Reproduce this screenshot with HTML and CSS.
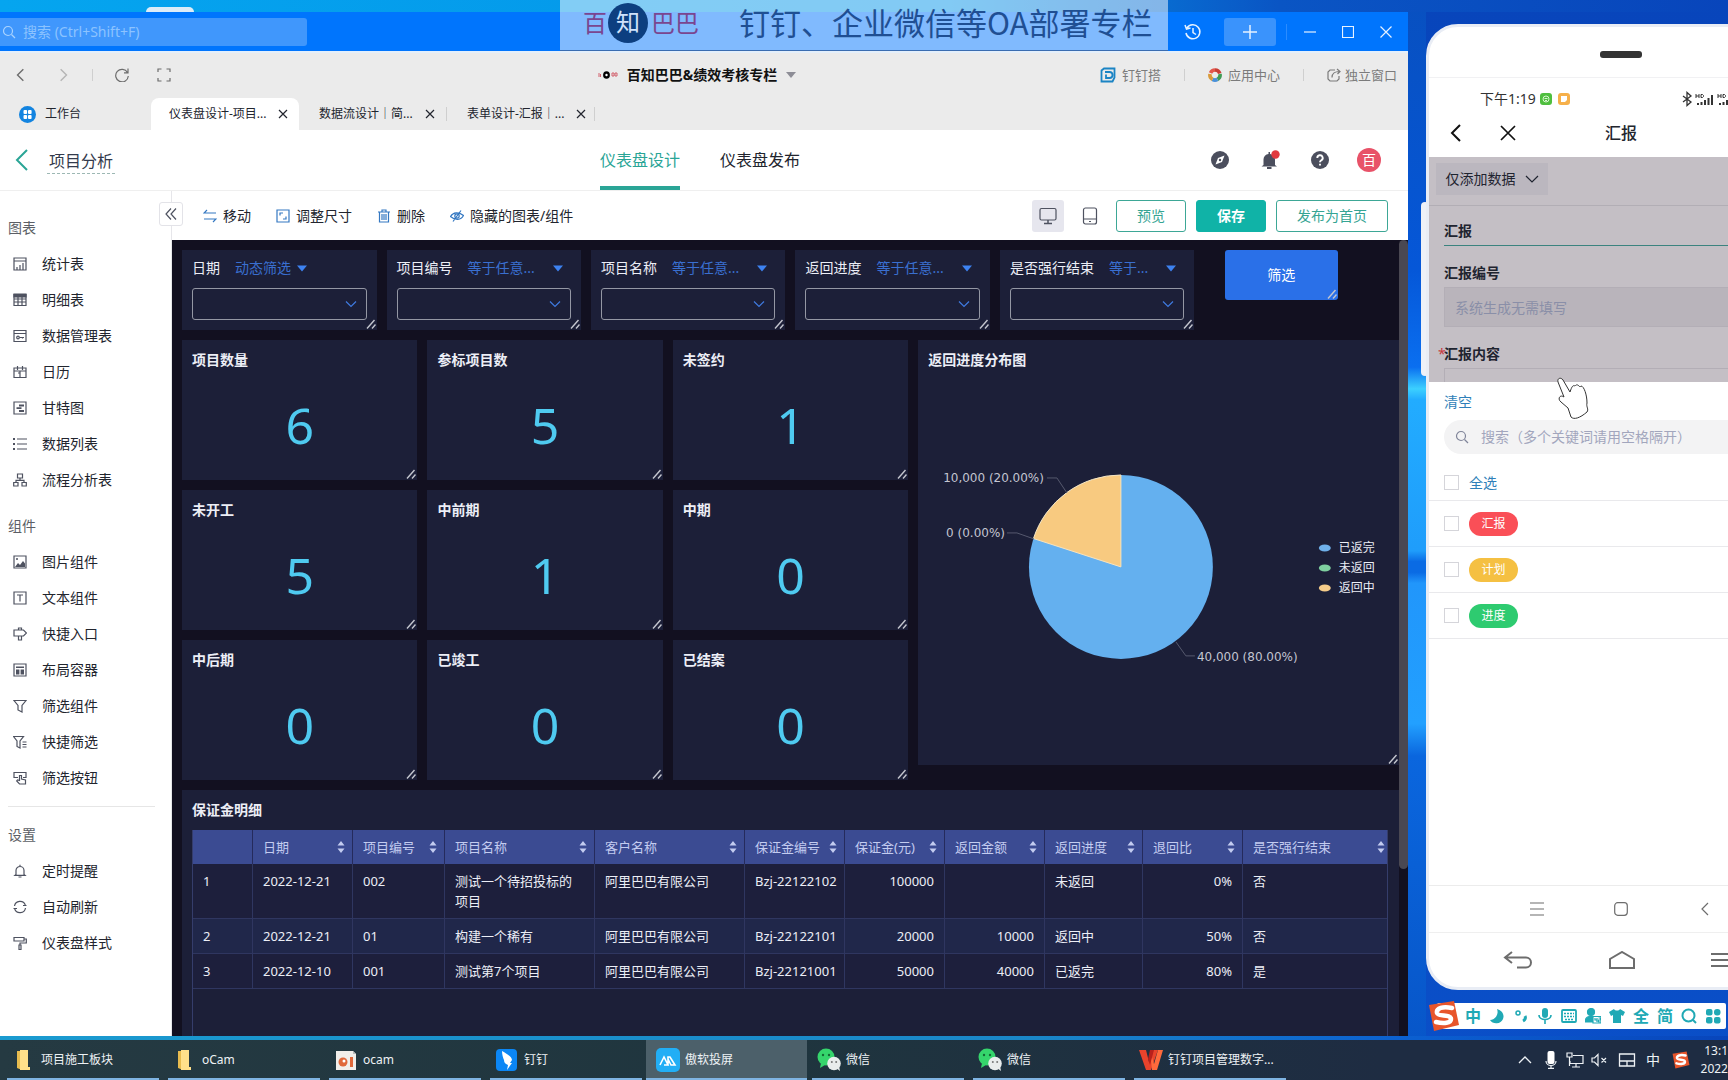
FILE: index.html
```html
<!DOCTYPE html>
<html lang="zh-CN">
<head>
<meta charset="utf-8">
<title>项目分析</title>
<link rel="stylesheet" href="styles.css">
</head>
<body>
<svg class="defs" aria-hidden="true">
  <symbol id="x" viewBox="0 0 12 12"><path d="M2 2l8 8M10 2l-8 8"/></symbol>
  <symbol id="left" viewBox="0 0 12 12"><path d="M8 1L3 6l5 5"/></symbol>
  <symbol id="right" viewBox="0 0 12 12"><path d="M4 1l5 5-5 5"/></symbol>
  <symbol id="down" viewBox="0 0 12 12"><path d="M1 3.500l5 5 5-5"/></symbol>
  <symbol id="caret" viewBox="0 0 10 6"><path d="M0 0h10L5 6z" fill="currentColor" stroke="none"/></symbol>
  <symbol id="search" viewBox="0 0 14 14"><circle cx="6" cy="6" r="4.500"/><path d="M9.500 9.500L13 13"/></symbol>
  <symbol id="grip" viewBox="0 0 10 10"><path d="M1 9.500L8.500 1M6 9.500l3.500-4"/></symbol>
  <symbol id="sort" viewBox="0 0 8 12"><path d="M4 0l3.500 4.500h-7zM4 12L.5 7.500h7z" fill="currentColor" stroke="none"/></symbol>
  <symbol id="i-stat" viewBox="0 0 14 14"><path d="M1 1h12v12H1zM1 4h12M4 13v-3M7 13V8M10 13V6"/></symbol>
  <symbol id="i-grid" viewBox="0 0 14 14"><path d="M1 1.500h12v11H1zM1 6h12M1 9h12M5 4v9M9 4v9"/><path d="M1 1h12v3H1z" fill="currentColor"/></symbol>
  <symbol id="i-manage" viewBox="0 0 14 14"><path d="M1 1.500h12v11H1zM1 4.500h12M6.500 8.500H11M9.500 8.500v1"/><circle cx="5" cy="8.500" r="1.300"/></symbol>
  <symbol id="i-cal" viewBox="0 0 14 14"><path d="M1 3h12v9.500H1zM1 6h12M4.500 1v4M9.500 1v4M7 6v6M5 8h2"/></symbol>
  <symbol id="i-gantt" viewBox="0 0 14 14"><path d="M1 1h12v12H1z"/><path d="M6 4.500h5M3.500 7.200h5M6 10h5" stroke-width="1.800"/></symbol>
  <symbol id="i-list" viewBox="0 0 14 14"><path d="M4 2h10M4 7h10M4 12h10"/><path d="M0 2h2M0 7h2M0 12h2" stroke-width="2"/></symbol>
  <symbol id="i-flow" viewBox="0 0 14 14"><path d="M4.500 1h5v4h-5zM.7 9.500h4.300v3.500H.7zM9 9.500h4.300v3.500H9zM7 5v2.300M3 9.500V7.300h8v2.200"/></symbol>
  <symbol id="i-pic" viewBox="0 0 14 14"><path d="M1 1h12v12H1z"/><path d="M2 12l3-4 2 2 3-4 2 2.500V12z" fill="currentColor" stroke="none"/><circle cx="4" cy="4" r="1" fill="currentColor" stroke="none"/></symbol>
  <symbol id="i-text" viewBox="0 0 14 14"><path d="M1 1h12v12H1zM4 4h6M7 4v6.500"/></symbol>
  <symbol id="i-sign" viewBox="0 0 14 14"><path d="M1 3h9.500L13.500 6 10.500 9H1zM5.500 3V1h3v2M5.500 9v4h3V9"/></symbol>
  <symbol id="i-layout" viewBox="0 0 14 14"><path d="M1 1h12v12H1z"/><path d="M3 3.500h8v1.500H3zM3 6.500h3.400v5H3zM7.600 6.500H11v5H7.600z" fill="currentColor" stroke="none"/></symbol>
  <symbol id="i-funnel" viewBox="0 0 14 14"><path d="M1 1.500h12L9 6.500V13l-4-2V6.500z"/></symbol>
  <symbol id="i-quick" viewBox="0 0 14 14"><path d="M.5 1.500h10L7 6v7l-3-1.500V6zM9.500 7h4M9.500 9.500h4M9.500 12h4"/></symbol>
  <symbol id="i-press" viewBox="0 0 14 14"><path d="M5 6.500H1v-5h12v5h-3M6.500 4.500v5l-2-.5-.8 1L6.500 13h6V9l-4-1V4.500z"/></symbol>
  <symbol id="i-bell" viewBox="0 0 14 14"><path d="M3 10.500V6.500a4 4 0 0 1 8 0v4l1 .8H2zM7 2.500V.7M5.500 13h3"/></symbol>
  <symbol id="i-sync" viewBox="0 0 14 14"><path d="M1.500 6A5.600 5.600 0 0 1 12.300 5M12.500 8A5.600 5.600 0 0 1 1.700 9M10 5.500h3.500M.5 8.500H4"/></symbol>
  <symbol id="i-roller" viewBox="0 0 14 14"><path d="M1 1.500h10V5H1zM11 3h2.300v4H7v2M6 9h2v4.500H6z"/></symbol>
  <symbol id="folder" viewBox="0 0 24 24"><path d="M5 3h6v17l-1 2-5-2z" fill="#e8bc4f"/><path d="M8 2h8v17h2l0 3H8z" fill="#ffe08a"/></symbol>
  <symbol id="wechat" viewBox="0 0 24 24"><circle cx="9" cy="9" r="8.500" fill="#35d56c"/><path d="M4 15l-1 5 5-3z" fill="#35d56c"/><circle cx="6" cy="7" r="1.200" fill="#146b35"/><circle cx="12" cy="7" r="1.200" fill="#146b35"/><circle cx="17" cy="15.500" r="6.800" fill="#e9ecec"/><path d="M19 20l4 3-1-5z" fill="#e9ecec"/><circle cx="14.800" cy="14" r="1" fill="#777"/><circle cx="19.200" cy="14" r="1" fill="#777"/></symbol>
  <symbol id="sogou" viewBox="0 0 32 32"><path d="M1 5L26 1l5 24L6 31z" fill="#e8552b"/><path d="M24 8C15 6 8 8 9 13c1 4 14 1 14 6 0 4-7 5-15 3" fill="none" stroke="#fff" stroke-width="4.500" stroke-linecap="round"/></symbol>
</svg>

<div class="desktop">
  <div class="stage">
    <main class="window">
      <header class="titlebar">
        <label class="find"><svg class="ic s14"><use href="#search"/></svg><input type="text" placeholder="搜索 (Ctrl+Shift+F)" aria-label="搜索"></label>
        <div class="winctl">
          <button aria-label="历史"><svg class="ic s18" viewBox="0 0 18 18"><path d="M3 5a7 7 0 1 1-1 5M1 2l1.500 4L6.500 5M9 5v4.500l3 2" stroke-width="1.500"/></svg></button>
          <button class="plus" aria-label="新建"><svg class="ic s14" viewBox="0 0 14 14"><path d="M7 0v14M0 7h14" stroke-width="1.500"/></svg></button>
          <i class="vsep"></i>
          <button aria-label="最小化"><svg class="ic s12" viewBox="0 0 12 12"><path d="M0 6h12"/></svg></button>
          <button aria-label="最大化"><svg class="ic s12" viewBox="0 0 12 12"><path d="M.5.5h11v11H.5z"/></svg></button>
          <button aria-label="关闭"><svg class="ic s12" viewBox="0 0 12 12"><path d="M.5.5l11 11M11.500.5l-11 11"/></svg></button>
        </div>
      </header>

      <nav class="navrow">
        <div class="navleft">
          <button aria-label="后退"><svg class="ic s14"><use href="#left"/></svg></button>
          <button class="off" aria-label="前进"><svg class="ic s14"><use href="#right"/></svg></button>
          <i class="vsep"></i>
          <button class="reload" aria-label="刷新"><svg class="ic s14" viewBox="0 0 14 14"><path d="M12.500 4.500A6.300 6.300 0 1 0 13.300 8M13 .5v4.300H9"/></svg></button>
          <button aria-label="全屏"><svg class="ic s14" viewBox="0 0 14 14"><path d="M1 4V1h3.500M9.500 1H13v3M13 10v3H9.500M4.500 13H1v-3"/></svg></button>
        </div>
        <button class="org"><svg class="orglogo" viewBox="0 0 20 8"><path d="M1 2v4M2.500 3v3M14 2h2v3h-2zM17 2h2v3h-2z" stroke="#d2616c" fill="none"/><ellipse cx="8.500" cy="4" rx="3.400" ry="3.800"/><circle cx="8.500" cy="4" r="1.200" fill="#fff"/></svg><b>百知巴巴&amp;绩效考核专栏</b><svg class="caret"><use href="#caret"/></svg></button>
        <div class="navright">
          <a href="#"><svg class="ic s16 blue" viewBox="0 0 16 16"><path d="M4 1.500h10.500v9l-2 4H1.500v-11zM5 5h4.500a2.800 2.800 0 0 1 0 6H6V7.500" stroke-width="1.800"/></svg>钉钉搭</a>
          <i class="vsep"></i>
          <a href="#"><svg class="s14" viewBox="0 0 14 14" fill="none" stroke-width="3.600"><path d="M2.500 5A5 5 0 0 1 7 2" stroke="#e2574c"/><path d="M7 2a5 5 0 0 1 4.800 3.500" stroke="#c93d34"/><path d="M12 6a5 5 0 0 1-2.500 5.300" stroke="#3f9b54"/><path d="M9.500 11.400a5 5 0 0 1-5 0" stroke="#4a90d8"/><path d="M4.500 11.300A5 5 0 0 1 2 6" stroke="#d99a3a"/></svg>应用中心</a>
          <i class="vsep"></i>
          <a class="solo" href="#"><svg class="ic s14" viewBox="0 0 14 14"><path d="M8 2H3L1 4v7l2 2h7l2-2V8M5 9.500c0-4 3-6 7.500-6M10 1l3 2.500-2.500 2.500"/></svg>独立窗口</a>
        </div>
      </nav>

      <div class="tabs">
        <a class="home" href="#"><svg class="s17" viewBox="0 0 17 17"><circle cx="8.500" cy="8.500" r="8.500" fill="#1384e0"/><g fill="#fff"><rect x="4.500" y="4" width="3.600" height="4" rx="1"/><rect x="9" y="4" width="3.600" height="4" rx="1"/><rect x="4.500" y="9" width="3.600" height="4" rx="1"/><rect x="9" y="9" width="3.600" height="4" rx="1"/></g></svg>工作台</a>
        <div class="tab on"><span>仪表盘设计-项目...</span><button aria-label="关闭"><svg class="ic s12"><use href="#x"/></svg></button></div>
        <div class="tab"><span>数据流设计｜简...</span><button aria-label="关闭"><svg class="ic s12"><use href="#x"/></svg></button></div>
        <div class="tab"><span>表单设计-汇报｜...</span><button aria-label="关闭"><svg class="ic s12"><use href="#x"/></svg></button></div>
      </div>

      <div class="apphead">
        <div class="crumb"><a href="#" aria-label="返回"><svg class="ic teal" width="14" height="22" viewBox="0 0 14 22"><path d="M12 1L2 11l10 10" stroke-width="2"/></svg></a><span>项目分析</span></div>
        <nav class="modes"><a class="on" href="#">仪表盘设计</a><a href="#">仪表盘发布</a></nav>
        <div class="acts">
          <button aria-label="导航"><svg class="s18" viewBox="0 0 18 18"><circle cx="9" cy="9" r="9" fill="#4b4e5d"/><path d="M13.500 4.500L11 11l-6.500 2.500L7 7z" fill="#fff"/><circle cx="9" cy="9" r="1.200" fill="#4b4e5d"/></svg></button>
          <button aria-label="通知"><svg class="s18 over" viewBox="0 0 18 18"><path d="M2.500 14V8.500a5.500 5.500 0 0 1 5-5.500V1H9v2c3 .5 5 2.500 5 5.500V14l2 1.500H.5zM6 16h4.500v2H6z" fill="#4b4e5d"/><circle cx="14.500" cy="3.500" r="4.200" fill="#e0393e"/></svg></button>
          <button aria-label="帮助"><svg class="ic s18 white" viewBox="0 0 18 18"><circle cx="9" cy="9" r="9" fill="#4b4e5d" stroke="none"/><path d="M6.300 7a2.700 2.700 0 1 1 4 2.300c-1 .6-1.300 1-1.300 2M9 12.800v1.800" stroke-width="1.900"/></svg></button>
          <span class="avatar">百</span>
        </div>
      </div>

      <div class="workspace">
        <aside class="side">
          <h2>图表</h2>
          <ul>
            <li><svg class="ic s14"><use href="#i-stat"/></svg>统计表</li>
            <li><svg class="ic s14"><use href="#i-grid"/></svg>明细表</li>
            <li><svg class="ic s14"><use href="#i-manage"/></svg>数据管理表</li>
            <li><svg class="ic s14"><use href="#i-cal"/></svg>日历</li>
            <li><svg class="ic s14"><use href="#i-gantt"/></svg>甘特图</li>
            <li><svg class="ic s14"><use href="#i-list"/></svg>数据列表</li>
            <li><svg class="ic s14"><use href="#i-flow"/></svg>流程分析表</li>
          </ul>
          <h2>组件</h2>
          <ul>
            <li><svg class="ic s14"><use href="#i-pic"/></svg>图片组件</li>
            <li><svg class="ic s14"><use href="#i-text"/></svg>文本组件</li>
            <li><svg class="ic s14"><use href="#i-sign"/></svg>快捷入口</li>
            <li><svg class="ic s14"><use href="#i-layout"/></svg>布局容器</li>
            <li><svg class="ic s14"><use href="#i-funnel"/></svg>筛选组件</li>
            <li><svg class="ic s14"><use href="#i-quick"/></svg>快捷筛选</li>
            <li><svg class="ic s14"><use href="#i-press"/></svg>筛选按钮</li>
          </ul>
          <hr>
          <h2>设置</h2>
          <ul>
            <li><svg class="ic s14"><use href="#i-bell"/></svg>定时提醒</li>
            <li><svg class="ic s14"><use href="#i-sync"/></svg>自动刷新</li>
            <li><svg class="ic s14"><use href="#i-roller"/></svg>仪表盘样式</li>
          </ul>
          <button class="fold" aria-label="收起"><svg class="ic s12" viewBox="0 0 12 12"><path d="M6 .5L1 6l5 5.500M11 .5L6 6l5 5.500"/></svg></button>
        </aside>

        <section class="editor">
          <div class="toolbar">
            <button><svg class="ic s14 blue" viewBox="0 0 14 14"><path d="M4 1L1 4h12M10 13l3-3H1"/></svg>移动</button>
            <button><svg class="ic s14 blue" viewBox="0 0 14 14"><path d="M1 1h12v12H1zM4 6.500V4h3M10 7.500V10H7"/></svg>调整尺寸</button>
            <button><svg class="ic s14 blue" viewBox="0 0 14 14"><path d="M1 3h12M5 3V1h4v2M2.500 3v10h9V3M5 5v6M7 5v6M9 5v6"/></svg>删除</button>
            <button><svg class="ic s14 blue" viewBox="0 0 14 14"><path d="M.5 7.500C3 3 9 2.500 13.500 6.500 11 11.500 5 11.500.5 7.500zM11 1.500L3 12.500"/><circle cx="7" cy="7" r="2.200"/></svg>隐藏的图表/组件</button>
            <div class="tools">
              <button class="dev on" aria-label="电脑"><svg class="ic s18" viewBox="0 0 18 18"><rect x="1" y="1.500" width="16" height="11.500" rx="1.500"/><path d="M9 13v3M5 16.500h8" stroke-width="1.500"/></svg></button>
              <button class="dev" aria-label="手机"><svg class="ic s18" viewBox="0 0 18 18"><rect x="2.500" y="1" width="13" height="16" rx="2"/><path d="M3 12h12M8 14.500h2"/></svg></button>
              <button class="btn">预览</button>
              <button class="btn solid">保存</button>
              <button class="btn wide">发布为首页</button>
            </div>
          </div>

          <div class="view">
            <div class="board">
              <div class="card filter"><div class="fl"><label for="f1">日期</label><button class="tight">动态筛选<svg><use href="#caret"/></svg></button></div><div class="sel"><select id="f1"></select><svg class="ic s12"><use href="#down"/></svg></div><svg class="grip"><use href="#grip"/></svg></div>
              <div class="card filter"><div class="fl"><label for="f2">项目编号</label><button>等于任意...<svg><use href="#caret"/></svg></button></div><div class="sel"><select id="f2"></select><svg class="ic s12"><use href="#down"/></svg></div><svg class="grip"><use href="#grip"/></svg></div>
              <div class="card filter"><div class="fl"><label for="f3">项目名称</label><button>等于任意...<svg><use href="#caret"/></svg></button></div><div class="sel"><select id="f3"></select><svg class="ic s12"><use href="#down"/></svg></div><svg class="grip"><use href="#grip"/></svg></div>
              <div class="card filter"><div class="fl"><label for="f4">返回进度</label><button>等于任意...<svg><use href="#caret"/></svg></button></div><div class="sel"><select id="f4"></select><svg class="ic s12"><use href="#down"/></svg></div><svg class="grip"><use href="#grip"/></svg></div>
              <div class="card filter"><div class="fl"><label for="f5">是否强行结束</label><button>等于...<svg><use href="#caret"/></svg></button></div><div class="sel"><select id="f5"></select><svg class="ic s12"><use href="#down"/></svg></div><svg class="grip"><use href="#grip"/></svg></div>
              <button class="go">筛选<svg class="grip"><use href="#grip"/></svg></button>

              <div class="card stat"><h3>项目数量</h3><p>6</p><svg class="grip"><use href="#grip"/></svg></div>
              <div class="card stat"><h3>参标项目数</h3><p>5</p><svg class="grip"><use href="#grip"/></svg></div>
              <div class="card stat"><h3>未签约</h3><p>1</p><svg class="grip"><use href="#grip"/></svg></div>
              <div class="card pie">
                <h3>返回进度分布图</h3>
                <svg class="chart" viewBox="0 0 481 385">
                  <circle cx="203" cy="187" r="92" fill="#64b0ef"/>
                  <path d="M203 187V95A92 92 0 0 0 115.500 158.600z" fill="#f8ca80" stroke="#f5e3c0" stroke-width="1"/>
                  <g fill="none" stroke="#55586d"><path d="M129 98h10l10 15M89 153h10l17 6M258 262l10 14h9"/></g>
                  <g class="lab"><text x="126" y="102" text-anchor="end">10,000 (20.00%)</text><text x="87" y="157" text-anchor="end">0 (0.00%)</text><text x="279" y="281">40,000 (80.00%)</text></g>
                  <g><ellipse cx="407" cy="168" rx="6" ry="3.500" fill="#6fb0ea"/><ellipse cx="407" cy="188" rx="6" ry="3.500" fill="#7fd0a0"/><ellipse cx="407" cy="208" rx="6" ry="3.500" fill="#f5cc8a"/></g>
                  <g class="leg"><text x="421" y="172">已返完</text><text x="421" y="192">未返回</text><text x="421" y="212">返回中</text></g>
                </svg>
                <svg class="grip"><use href="#grip"/></svg>
              </div>
              <div class="card stat"><h3>未开工</h3><p>5</p><svg class="grip"><use href="#grip"/></svg></div>
              <div class="card stat"><h3>中前期</h3><p>1</p><svg class="grip"><use href="#grip"/></svg></div>
              <div class="card stat"><h3>中期</h3><p>0</p><svg class="grip"><use href="#grip"/></svg></div>
              <div class="card stat"><h3>中后期</h3><p>0</p><svg class="grip"><use href="#grip"/></svg></div>
              <div class="card stat"><h3>已竣工</h3><p>0</p><svg class="grip"><use href="#grip"/></svg></div>
              <div class="card stat"><h3>已结案</h3><p>0</p><svg class="grip"><use href="#grip"/></svg></div>

              <div class="card detail">
                <h3>保证金明细</h3>
                <div class="tbox">
                  <table>
                    <colgroup><col class="w60"><col class="w100"><col class="w92"><col class="w150"><col class="w150"><col class="w100"><col class="w100"><col class="w100"><col class="w98"><col class="w100"><col></colgroup>
                    <thead><tr><th></th><th>日期<svg><use href="#sort"/></svg></th><th>项目编号<svg><use href="#sort"/></svg></th><th>项目名称<svg><use href="#sort"/></svg></th><th>客户名称<svg><use href="#sort"/></svg></th><th>保证金编号<svg><use href="#sort"/></svg></th><th>保证金(元)<svg><use href="#sort"/></svg></th><th>返回金额<svg><use href="#sort"/></svg></th><th>返回进度<svg><use href="#sort"/></svg></th><th>退回比<svg><use href="#sort"/></svg></th><th>是否强行结束<svg><use href="#sort"/></svg></th></tr></thead>
                    <tbody>
                      <tr><td>1</td><td>2022-12-21</td><td>002</td><td>测试一个待招投标的项目</td><td>阿里巴巴有限公司</td><td class="code">Bzj-22122102</td><td class="n">100000</td><td class="n"></td><td>未返回</td><td class="n">0%</td><td>否</td></tr>
                      <tr><td>2</td><td>2022-12-21</td><td>01</td><td>构建一个稀有</td><td>阿里巴巴有限公司</td><td class="code">Bzj-22122101</td><td class="n">20000</td><td class="n">10000</td><td>返回中</td><td class="n">50%</td><td>否</td></tr>
                      <tr><td>3</td><td>2022-12-10</td><td>001</td><td>测试第7个项目</td><td>阿里巴巴有限公司</td><td class="code">Bzj-22121001</td><td class="n">50000</td><td class="n">40000</td><td>已返完</td><td class="n">80%</td><td>是</td></tr>
                    </tbody>
                  </table>
                </div>
              </div>
            </div>
            <div class="scroll"><i></i></div>
          </div>
        </section>
      </div>
    </main>

    <div class="right">
      <section class="phone">
        <div class="speaker"><i></i></div>
        <div class="status">
          <span>下午1:19</span>
          <svg width="12" height="12" viewBox="0 0 12 12"><rect width="12" height="12" rx="3" fill="#4fbf3f"/><circle cx="6" cy="6" r="3" fill="none" stroke="#d8f5d0"/><path d="M4.500 5.500h3M5 7.500h2" stroke="#d8f5d0"/></svg>
          <svg width="12" height="12" viewBox="0 0 12 12"><rect width="12" height="12" rx="3" fill="#f6b04a"/><path d="M3 3h6v4L7 9H3z" fill="#fff"/></svg>
          <svg class="sig" width="66" height="16" viewBox="0 0 66 16"><path d="M1 5l8 6-4 3.500v-13L9 5 1 11" fill="none" stroke="#333" stroke-width="1.300"/><g stroke="#333" stroke-width="2"><path d="M16 14v-2M19.500 14v-3M23 14V9M26.500 14V7M30 14V4M38 14v-2M41.500 14v-3M45 14V9M48.500 14V7M52 14V4"/></g><g stroke="#333" fill="none"><path d="M14 3v4M17 3v4M14 5h3M19 3.500h1.500l1 1v1l-1 1H19zM36 3v4M39 3v4M36 5h3M41 3.500h1.500l1 1v1l-1 1H41z"/></g></svg>
        </div>
        <div class="phead">
          <button aria-label="返回"><svg class="ic" width="12" height="18" viewBox="0 0 12 18"><path d="M10 1L2 9l8 8" stroke-width="2"/></svg></button>
          <button aria-label="关闭"><svg class="ic" width="16" height="16" viewBox="0 0 16 16"><path d="M1 1l14 14M15 1L1 15" stroke-width="1.700"/></svg></button>
          <strong>汇报</strong>
        </div>
        <div class="form">
          <div class="mode"><button>仅添加数据<svg class="ic s14" viewBox="0 0 14 14"><path d="M1 4l6 6 6-6"/></svg></button></div>
          <h4>汇报</h4>
          <label for="no">汇报编号</label>
          <input id="no" type="text" placeholder="系统生成无需填写">
          <label class="req" for="body">汇报内容</label>
          <input id="body" type="text">
        </div>
        <div class="sheet">
          <a class="clear" href="#">清空</a>
          <label class="pill"><svg class="ic s14"><use href="#search"/></svg><input type="text" placeholder="搜索（多个关键词请用空格隔开）" aria-label="搜索"></label>
          <label class="opt all"><input type="checkbox">全选</label>
          <label class="opt"><input type="checkbox"><span class="tag red">汇报</span></label>
          <label class="opt"><input type="checkbox"><span class="tag yellow">计划</span></label>
          <label class="opt"><input type="checkbox"><span class="tag green">进度</span></label>
        </div>
        <div class="keys">
          <svg class="ic s14" viewBox="0 0 14 14"><path d="M0 1h14M0 7h14M0 13h14"/></svg>
          <svg class="ic s14" viewBox="0 0 14 14"><rect x=".7" y=".7" width="12.600" height="12.600" rx="3"/></svg>
          <svg class="ic s14" viewBox="0 0 14 14"><path d="M10 1L4 7l6 6"/></svg>
        </div>
        <div class="keys big">
          <svg class="ic" width="30" height="18" viewBox="0 0 30 18"><path d="M9 1L2 6.500 9 12M2 6.500h21a5 5 0 0 1 0 10h-9" stroke-width="2"/></svg>
          <svg class="ic" width="28" height="18" viewBox="0 0 28 18"><path d="M2 17V8L14 1l12 7v9z" stroke-width="2"/></svg>
          <svg class="ic" width="22" height="16" viewBox="0 0 22 16"><path d="M0 2h22M0 8h22M0 14h22" stroke-width="2"/></svg>
        </div>
        <svg class="hand" viewBox="0 0 34 44"><path d="M14 15L7 3C5 0 1 1 2 5l6 15c-4-3-7 2-3 5l7 6 3 9c3 3 9 1 16-5 2-3-1-5 0-9 0-8-3-17-6-17-1 1-1 1-2 0-2-2-3-1-4 0-2-1-3 0-5 6z"/></svg>
      </section>
      <div class="ime">
        <svg class="sg"><use href="#sogou"/></svg>
        <span>中</span>
        <span><svg class="s16" viewBox="0 0 16 16"><path d="M8 1a8 8 0 0 1-7 11 7.500 7.500 0 0 0 13-1C16 6 12 2 8 1z" fill="currentColor"/></svg></span>
        <span><svg class="ic s16" viewBox="0 0 16 16"><circle cx="5" cy="5" r="2" stroke-width="1.500"/><path d="M12 8c1 2 0 4-2 5" stroke-width="3"/></svg></span>
        <span><svg class="ic s16" viewBox="0 0 16 16"><rect x="5" y="0" width="6" height="10" rx="3" fill="currentColor" stroke="none"/><path d="M2 7c0 6 12 6 12 0M8 12v4" stroke-width="1.600"/></svg></span>
        <span><svg class="ic s16" viewBox="0 0 16 16"><rect x="1" y="2" width="14" height="12" rx="1" stroke-width="1.800"/><path d="M3 5.500h10M3 8.500h10M4 11.500h8" stroke-width="1.700" stroke-dasharray="2 1"/></svg></span>
        <span><svg class="ic s16" viewBox="0 0 16 16"><circle cx="6" cy="4" r="3.500" fill="currentColor"/><path d="M0 14c0-8 12-8 12 0z" fill="currentColor"/><path d="M8 8.500h8v6.500H8z" fill="#fff"/><path d="M10 10v2h2M12 10v4M13.500 10h2v2h-2v2h2"/></svg></span>
        <span><svg class="s16" viewBox="0 0 16 16"><path d="M0 4l5-3c1 2 5 2 6 0l5 3-2 4-2-1v8H4V7L2 8z" fill="currentColor"/></svg></span>
        <span>全</span>
        <span>简</span>
        <span><svg class="ic s16" viewBox="0 0 16 16"><circle cx="7.500" cy="7.500" r="6" stroke-width="2"/><path d="M12 12l3 3" stroke-width="2"/></svg></span>
        <span><svg class="s16" viewBox="0 0 16 16"><g fill="currentColor"><rect x="1" y="1" width="6.500" height="6.500" rx="2"/><rect x="9" y="1" width="6.500" height="6.500" rx="3"/><rect x="1" y="9" width="6.500" height="6.500" rx="2"/><rect x="9" y="9" width="6.500" height="6.500" rx="2"/></g></svg></span>
      </div>
    </div>
  </div>

  <div class="peek"></div>
  <div class="banner"><span class="brand">百<b>知</b>巴巴</span><span class="slogan">钉钉、企业微信等OA部署专栏</span></div>

  <footer class="taskbar">
    <button class="task"><svg><use href="#folder"/></svg>项目施工板块</button>
    <button class="task"><svg><use href="#folder"/></svg>oCam</button>
    <button class="task"><svg viewBox="0 0 24 24"><path d="M2 3h17l3 3v16H2z" fill="#f1eeea"/><path d="M19 3l3 3h-3z" fill="#bbb"/><circle cx="9" cy="14" r="4.500" fill="#e0683a"/><circle cx="10" cy="13" r="1.500" fill="#fff"/><path d="M16 9h3v10h-3z" fill="#e0683a"/></svg>ocam</button>
    <button class="task"><svg viewBox="0 0 24 24"><rect x="1" y="1" width="21" height="22" rx="4" fill="#0b86f5"/><path d="M7 3c5 3 10 6 10 9l-2 3h2l-5 7 1-5c-3-1-4-3-4-5-1-2-2-6-2-9z" fill="#fff"/></svg>钉钉</button>
    <button class="task on"><svg viewBox="0 0 24 24"><rect width="24" height="24" rx="5" fill="#22aef5"/><path d="M4 17l4-8 4 8h-4M12 17V9l2 0 5 8h-4l-3-6" fill="none" stroke="#fff" stroke-width="1.600"/></svg>傲软投屏</button>
    <button class="task"><svg><use href="#wechat"/></svg>微信</button>
    <button class="task"><svg><use href="#wechat"/></svg>微信</button>
    <button class="task"><svg viewBox="0 0 24 24"><path d="M0 2h7l3 12 4-12h5l-7 20H7z" fill="#e8432c"/><path d="M11 2l4 14 4-14h5l-6 20h-5z" fill="#ff6a3c"/><path d="M11 2h4l-4 15-2-6z" fill="#b8201c"/></svg>钉钉项目管理数字...</button>
    <div class="tray">
      <svg class="ic s14" viewBox="0 0 14 14"><path d="M1 10l6-6 6 6" stroke-width="1.300"/></svg>
      <svg class="ic s18" viewBox="0 0 18 18"><rect x="5.500" y="0" width="7" height="13" rx="2" fill="#fff" stroke="none"/><path d="M4 10c0 6 10 6 10 0M9 15v2M6 17.300h6"/></svg>
      <svg class="ic s18" viewBox="0 0 18 18"><path d="M7 4.500h10v8H4V10M10 12.500V16M6 16h8M1 2h5v4H1zM3.500 6v9"/></svg>
      <svg class="ic s18" viewBox="0 0 18 18"><path d="M2 7h2.500L8 3.500v11L4.500 11H2zM11.500 7l4.500 4.500M16 7l-4.500 4.500"/></svg>
      <svg class="ic s18" viewBox="0 0 18 18"><path d="M1.500 3h15v12h-15zM1.500 10h15M9 10v5" stroke-width="1.300"/></svg>
      <span>中</span>
      <svg class="s18"><use href="#sogou"/></svg>
      <time><span>13:1</span><span>2022</span></time>
    </div>
  </footer>
</div>
</body>
</html>
```
FILE: styles.css
```css
* { box-sizing: border-box; }
body {
  margin: 0;
  font: 14px/20px "Noto Sans", "Noto Sans CJK SC", sans-serif;
  color: #22252e;
}
h2, h3, h4, p, ul { margin: 0; padding: 0; }
ul { list-style: none; }
a { color: inherit; text-decoration: none; }
svg { display: block; flex: none; }
button {
  display: flex; align-items: center; justify-content: center;
  margin: 0; padding: 0; border: 0; background: none;
  font: inherit; color: inherit; white-space: nowrap;
}
input, select { font: inherit; color: inherit; margin: 0; min-width: 0; }
.defs { display: none; }
.ic { fill: none; stroke: currentColor; stroke-width: 1.2; }
.s12 { width: 12px; height: 12px; }
.s14 { width: 14px; height: 14px; }
.s16 { width: 16px; height: 16px; }
.s17 { width: 17px; height: 17px; }
.s18 { width: 18px; height: 18px; }
.over { overflow: visible; }
.blue { color: #3478c2; }
.navright .blue { color: #1b84c4; }
.teal { color: #2aa596; }
.white { color: #fff; }
.vsep { width: 1px; height: 12px; background: #cfcfcf; }

.desktop {
  position: relative; display: flex; flex-direction: column;
  height: 100vh; overflow: hidden;
  background:
    linear-gradient(90deg, #05a5ef, #0494e8 55%, #0a55c4 74%, #0845bb) 0 0 / 100% 12px no-repeat,
    linear-gradient(90deg, #1a9bd0, #1a86c8 60%, #0b5fd0 82%, #0845bb) 0 1036px / 100% 4px no-repeat,
    linear-gradient(180deg, #0850c0, #0557d8 25%, #0a6ff0 34%, #3cd0ff 36%, #22acff 37%, #1f9dfb 51%, #0a6be4 52%, #0a6be4 53%, #2196fb 54%, #22a0ff 67%, #0a66de 70%, #0754c6) 0 0 / 1426px 100% no-repeat,
    linear-gradient(180deg, #0845bb, #0a4fc8);
}
.stage { flex: 1; min-height: 0; display: grid; grid-template-columns: minmax(0, 1fr) 320px; }
.window { margin: 12px 0 4px; display: flex; flex-direction: column; min-height: 0; background: #fff; overflow: hidden; }

.titlebar { height: 39px; flex: none; display: flex; justify-content: space-between; align-items: center; background: #0075fd; }
.find { display: flex; align-items: center; gap: 5px; width: 307px; height: 28px; padding-left: 2px; border-radius: 0 3px 3px 0; background: #4097fc; color: #a9d3ff; }
.find input { flex: 1; border: 0; background: none; outline: 0; }
.find input::placeholder { color: #8cc3ff; }
.winctl { display: flex; align-items: center; color: #e6f2ff; }
.winctl button { width: 38px; height: 28px; }
.winctl .plus { width: 52px; margin: 0 10px 0 12px; background: #3a93fc; border-radius: 3px; }
.winctl .vsep { background: #2b8cff; height: 16px; margin-right: 4px; }
.winctl button:last-child { margin-right: 3px; }

.navrow { flex: none; height: 47px; display: grid; grid-template-columns: 1fr auto 1fr; align-items: center; padding: 0 14px 2px 0; background: #ebebeb; border-top: 2px solid #e4effb; color: #6d6d6d; }
.navleft { display: flex; align-items: center; padding-left: 14px; }
.navleft .off { color: #b5b5b5; margin-left: 28px; }
.navleft .vsep { margin: 0 22px; }
.navleft .reload { margin-right: 28px; }
.org { gap: 9px; color: #111; }
.orglogo { width: 20px; height: 8px; }
.org .caret { width: 10px; height: 6px; color: #8d8d96; }
.navright { display: flex; align-items: center; justify-content: flex-end; gap: 23px; margin-right: -3px; font-size: 13px; color: #7b7b7b; }
.navright a { display: flex; align-items: center; gap: 6px; }
.navright .solo { gap: 4px; }

.tabs { flex: none; height: 32px; display: flex; background: #ebebeb; font-size: 12px; }
.home { width: 151px; display: flex; align-items: center; gap: 9px; padding-left: 19px; }
.tab { position: relative; display: flex; align-items: center; gap: 10px; width: 148px; padding: 0 10px 0 18px; }
.tab span { flex: 1; white-space: nowrap; }
.tab.on { background: #fff; border-radius: 8px 8px 0 0; }
.tab:not(.on) { border-right: 1px solid #d2d2d2; border-image: linear-gradient(transparent 30%, #cfcfcf 30%, #cfcfcf 70%, transparent 70%) 1; padding-left: 20px; }

.apphead { flex: none; height: 61px; display: grid; grid-template-columns: 1fr auto 1fr; padding-right: 8px; border-bottom: 1px solid #efefef; font-size: 16px; }
.crumb { display: flex; align-items: center; gap: 18px; padding-left: 15px; }
.crumb span { padding: 4px 2px 2px; border-bottom: 1px dashed #9db8b4; color: #333b4d; }
.modes { display: flex; gap: 40px; line-height: 60px; }
.modes a { border-bottom: 4px solid transparent; height: 60px; }
.modes .on { color: #2aa596; border-color: #2aa596; }
.acts { display: flex; align-items: center; justify-content: flex-end; gap: 32px; padding-right: 19px; }
.avatar { width: 24px; height: 24px; margin-left: -4px; border-radius: 50%; background: #e85268; color: #fff; font-size: 14px; line-height: 24px; text-align: center; }

.workspace { flex: 1; min-height: 0; display: grid; grid-template-columns: 172px minmax(0, 1fr); }
.side { position: relative; padding-top: 19px; border-right: 1px solid #e6e6ea; }
.side h2 { padding-left: 8px; font-size: 14px; font-weight: 400; line-height: 36px; color: #5c5f66; }
.side ul + h2 { margin-top: 10px; }
.side li { display: flex; align-items: center; gap: 15px; height: 36px; padding-left: 13px; }
.side .ic { color: #4e5260; }
.side hr { margin: 10px 16px 10px 8px; border: 0; border-top: 1px solid #e6e6e6; }
.fold { position: absolute; top: 11px; right: -12px; width: 24px; height: 24px; border: 1px solid #e3e3e8; border-radius: 3px; background: #fff; z-index: 1; }

.editor { display: flex; flex-direction: column; min-height: 0; }
.toolbar { flex: none; display: flex; align-items: center; gap: 25px; height: 49px; padding: 0 20px 0 31px; }
.toolbar > button { gap: 6px; }
.tools { display: flex; align-items: center; gap: 10px; margin-left: auto; }
.dev { width: 32px; height: 32px; border-radius: 3px; color: #4e5260; }
.dev.on { background: #e6e6ee; }
.btn { width: 70px; height: 32px; border: 1px solid #3da796; border-radius: 3px; color: #35a493; }
.btn.solid { background: #10b3a7; border-color: #10b3a7; color: #fff; font-weight: 700; }
.btn.wide { width: 112px; }

.view { flex: 1; min-height: 0; display: flex; background: #121020; }
.scroll { width: 9px; }
.scroll i { display: block; height: 79%; border-radius: 5px; background: #4a4852; }
.board { flex: 1; min-width: 0; display: grid; grid-template-columns: repeat(60, minmax(0, 1fr)); grid-template-rows: 80px 140px 140px 140px minmax(0, 1fr); gap: 10px; padding: 10px 0 0 10px; overflow: hidden; }
.card { position: relative; padding: 10px; background: #1c1f38; color: #eceef6; min-width: 0; }
.card h3 { font-size: 14px; line-height: 20px; }
.grip { position: absolute; right: 1px; bottom: 1px; width: 10px; height: 10px; fill: none; stroke: #c4c6cf; stroke-width: 1.4; }
.filter { grid-column: span 10; padding-top: 8px; }
.fl { display: flex; gap: 15px; }
.fl label { white-space: nowrap; }
.fl button { flex: 1; justify-content: space-between; padding-right: 8px; color: #3a6fd0; }
.fl .tight { flex: none; gap: 6px; }
.fl svg { width: 10px; height: 7px; color: #3d82f0; }
.sel { position: relative; margin-top: 10px; }
.sel select { display: block; width: 100%; height: 32px; appearance: none; border: 1px solid #9497a4; border-radius: 3px; background: none; }
.sel svg { position: absolute; right: 10px; top: 10px; color: #3f7ae0; pointer-events: none; }
.go { position: relative; grid-column: 52 / span 6; height: 50px; background: #2a70e8; border-radius: 3px; color: #fff; }
.stat { grid-column: span 12; }
.stat p { margin-top: 20px; font-size: 50px; line-height: 70px; text-align: center; color: #4fcaf0; }
.pie { grid-column: 37 / span 24; grid-row: 2 / span 3; align-self: start; padding: 10px 0 0; }
.pie h3 { padding-left: 10px; }
.chart { width: 100%; aspect-ratio: 481 / 385; margin-top: 10px; }
.lab { font: 12px Verdana, "DejaVu Sans", sans-serif; fill: #c4c6d2; }
.leg { font-size: 12px; fill: #eceef6; }
.detail { grid-column: 1 / -1; display: flex; flex-direction: column; padding-bottom: 0; }
.tbox { flex: 1; margin: 10px 1px 0 0; border: 1px solid #353d6b; border-width: 0 1px; font-size: 13px; overflow: hidden; }
table { width: 100%; table-layout: fixed; border-collapse: separate; border-spacing: 0; }
.w60 { width: 60px; } .w92 { width: 92px; } .w98 { width: 98px; } .w100 { width: 100px; } .w150 { width: 150px; }
th { position: relative; height: 34px; padding: 0 10px; background: #3b4b92; color: #c3ccf0; font-weight: 400; text-align: left; border-right: 1px solid #252b5c; white-space: nowrap; }
th svg { position: absolute; right: 7px; top: 11px; width: 8px; height: 12px; }
td { padding: 7px 10px; vertical-align: top; border-right: 1px solid #2f3660; border-bottom: 1px solid #2f3660; }
th:last-child, td:last-child { border-right: 0; }
th:last-child svg { right: 2px; }
tbody tr { background: #1d1f3c; }
tbody tr:nth-child(2) { background: #20274a; }
.code { white-space: nowrap; }
.n { text-align: right; }

.right { min-width: 0; padding: 24px 0 0 18px; display: flex; flex-direction: column; gap: 13px; position: relative; }
.right::before { content: ""; position: absolute; left: 13px; top: 202px; width: 8px; height: 174px; border-radius: 4px; background: #eef1f7; }
.phone { position: relative; flex: none; width: 390px; height: calc(100vh - 114px); display: flex; flex-direction: column; border: 3px solid #e9edf5; border-radius: 32px; background: #fff; overflow: hidden; }
.speaker { flex: none; height: 51px; display: flex; justify-content: center; align-items: flex-end; padding-bottom: 19px; border-bottom: 1px solid #f1f1f3; }
.speaker i { width: 42px; height: 7px; border-radius: 3px; background: #333; }
.status { flex: none; height: 42px; display: flex; align-items: center; gap: 4px; padding-left: 51px; color: #333; }
.status svg + svg { margin-left: 2px; }
.status .sig { margin-left: 108px; }
.phead { flex: none; position: relative; height: 37px; display: flex; align-items: flex-start; gap: 38px; padding: 4px 0 0 21px; }
.phead button { height: 18px; color: #111; }
.phead strong { position: absolute; left: 0; right: 0; top: 3px; text-align: center; font-size: 16px; font-weight: 500; pointer-events: none; }
.form { flex: none; height: 225px; padding-left: 15px; background: #c4bfc5; overflow: hidden; color: #1f2430; }
.mode { height: 49px; padding-top: 6px; margin-left: -15px; padding-left: 7px; border-bottom: 1px solid #b2aeb5; }
.mode button { gap: 9px; width: 112px; height: 32px; background: #bbb7bf; }
.form h4 { height: 40px; padding-top: 15px; font-size: 14px; border-bottom: 1px solid #3b837f; }
.form label { display: block; padding: 17px 0 4px; font-weight: 700; }
.form input { display: block; width: 360px; height: 40px; padding: 0 10px; border: 1px solid #b3aeb6; background: #b9b4bb; }
.form #body { background: none; }
.form input::placeholder { color: #8a8fa8; }
.form .req { position: relative; }
.req::before { content: "*"; position: absolute; left: -6px; color: #c83a40; font-weight: 400; }
.sheet { flex: 1; min-height: 0; border-bottom: 1px solid #ececec; }
.clear { display: block; padding: 10px 0 8px 15px; color: #2f7fb8; }
.pill { display: flex; align-items: center; gap: 10px; height: 34px; margin-left: 15px; padding-left: 11px; border-radius: 17px; background: #f3f3f4; color: #80859a; }
.pill input { flex: 1; border: 0; background: none; }
.pill input::placeholder { color: #a2a6bd; }
.opt { display: flex; align-items: center; gap: 10px; height: 46px; padding-left: 15px; border-bottom: 1px solid #e9e9ec; color: #2f7fb8; }
.opt.all { height: 47px; padding-top: 11px; }
.opt input { appearance: none; width: 15px; height: 15px; border: 1px solid #d5d5da; }
.tag { width: 49px; height: 24px; border-radius: 12px; color: #fff; font-size: 12px; line-height: 24px; text-align: center; }
.red { background: #fa4f57; }
.yellow { background: #f5c042; }
.green { background: #2ecb70; }
.keys { flex: none; height: 47px; display: flex; align-items: center; justify-content: space-between; padding: 0 101px; color: #6d6d6d; border-bottom: 1px solid #efefef; }
.keys.big { height: 54px; padding: 0 80px 0 74px; border: 0; }
.hand { position: absolute; left: 127px; top: 350px; width: 34px; height: 44px; fill: #fff; stroke: #333; }

.ime { display: flex; align-items: center; width: 289px; height: 26px; margin-left: 11px; background: #fff; border-radius: 2px; color: #20a9b5; font-weight: 700; font-size: 16px; }
.ime .sg { width: 32px; height: 32px; margin: 0 1px 0 -9px; overflow: visible; }
.ime span { width: 24px; display: flex; justify-content: center; }

.peek { position: absolute; left: 146px; top: 7px; width: 48px; height: 5px; border-radius: 5px 5px 0 0; background: #dcecf8; }
.banner { position: absolute; left: 560px; top: 0; width: 608px; height: 51px; display: flex; align-items: center; padding: 0 0 4px 23px; gap: 40px; background: rgba(255, 255, 255, .5); border-bottom: 1px solid #3a6cb0; color: #1f4f93; white-space: nowrap; }
.brand { display: flex; align-items: center; font-size: 24px; line-height: 32px; color: #7a4690; }
.brand b { width: 40px; height: 40px; margin: 0 3px 0 1px; border-radius: 50%; background: #0d3f80; color: #cfe2fb; font-weight: 400; line-height: 38px; text-align: center; }
.slogan { padding-bottom: 3px; font: 31px/40px "Noto Sans CJK SC", sans-serif; }

.taskbar { flex: none; height: 40px; display: flex; padding-left: 2px; background: linear-gradient(90deg, #253a42, #1f353e 45%, #1e2c42 80%); color: #eef2f5; font-size: 12px; }
.task { position: relative; flex: none; width: 161px; padding-left: 10px; gap: 5px; justify-content: flex-start; }
.task svg { width: 24px; height: 24px; }
.task::after { content: ""; position: absolute; left: 5px; right: 4px; bottom: 0; height: 2px; background: #7fb4e2; }
.task.on { background: #4c606a; }
.task.on::after { left: 0; right: 0; }
.tray { flex: none; display: flex; align-items: center; gap: 10px; margin-left: auto; font-size: 14px; }
.tray .s18 + .s18 { margin-left: -4px; }
.tray .s18:nth-of-type(5) { margin-left: 0; }
.tray span + .s18 { margin-left: 2px; }
.tray time { width: 28px; display: flex; flex-direction: column; align-items: flex-end; font-size: 12px; line-height: 18px; }
```
